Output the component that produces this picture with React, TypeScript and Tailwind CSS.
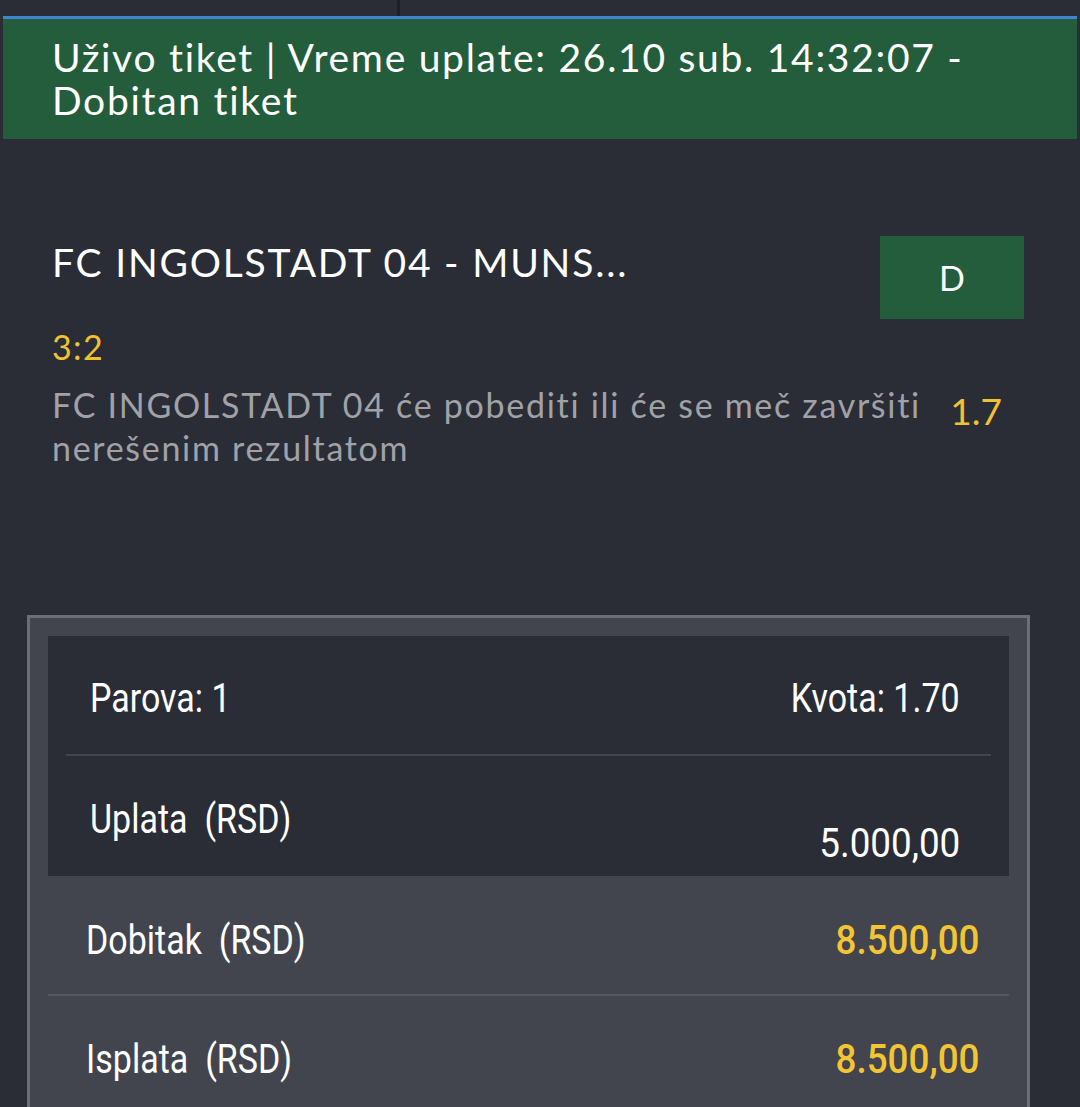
import React from "react";

const cond = "inline-block scale-x-[0.85] font-['Roboto',sans-serif]";

export default function App() {
  return (
    <div className="w-[1080px] h-[1107px] bg-[#2a2d36] overflow-hidden font-['Lato','Open_Sans',sans-serif]">
      {/* top strip */}
      <div className="h-[16px] flex">
        <div className="w-[397px]" />
        <div className="w-[3px] bg-[#1c1f26]" />
      </div>
      {/* banner */}
      <div className="mx-[3px] border-t-[3px] border-[#3f86cf] bg-[#235d3c] h-[123px] pl-[49px] pt-[17px]">
        <div className="text-white text-[39px] leading-[43px] tracking-[0.044em]">
          Uživo tiket | Vreme uplate: 26.10 sub. 14:32:07 -
          <br />
          Dobitan tiket
        </div>
      </div>
      {/* match */}
      <div className="pl-[52px] pr-[56px] pt-[97px]">
        <div className="flex justify-between items-start">
          <div className="text-white text-[39px] leading-[44px] pt-[4px] tracking-[0.046em]">
            FC INGOLSTADT 04 - MUNS...
          </div>
          <div className="w-[144px] h-[83px] bg-[#235d3c] flex items-center justify-center text-white text-[34px]">
            D
          </div>
        </div>
        <div className="text-[#f0c232] text-[34px] leading-[40px] mt-[8px] tracking-[0.04em]">3:2</div>
        <div className="flex items-start justify-between mt-[16px]">
          <div className="text-[#a0a2a8] text-[34px] leading-[43px] w-[885px] tracking-[0.05em]">
            FC INGOLSTADT 04 će pobediti ili će se meč završiti nerešenim rezultatom
          </div>
          <div className="text-[#f0c232] text-[37px] leading-[43px] pt-[6px] pr-[22px]">1.7</div>
        </div>
      </div>
      {/* summary box */}
      <div className="ml-[27px] mr-[50px] mt-[146px] border-[3px] border-b-0 border-[#6b6e75] bg-[#42454e] px-[18px] pt-[18px] pb-[40px]">
        <div className="bg-[#2a2d36] px-[18px]">
          <div className="h-[118px] flex items-center justify-between pl-[24px] pr-[31px] pt-[8px] text-white text-[40px]">
            <span className={`${cond} origin-left`}>Parova: 1</span>
            <span className={`${cond} origin-right`}>Kvota: 1.70</span>
          </div>
          <div className="h-[2px] bg-[#42454e]" />
          <div className="h-[120px] flex justify-between pl-[24px] pr-[31px] text-white text-[40px]">
            <span className={`${cond} origin-left pt-[34px] self-start`}>Uplata &nbsp;(RSD)</span>
            <span className={`${cond} origin-right pt-[58px] self-start scale-x-[0.92]`}>5.000,00</span>
          </div>
        </div>
        <div className="h-[118px] flex items-center justify-between pl-[38px] pr-[30px] pt-[12px] text-white text-[40px]">
          <span className={`${cond} origin-left`}>Dobitak &nbsp;(RSD)</span>
          <span className={`${cond} origin-right scale-x-[0.92] text-[#f3c532] font-medium`}>8.500,00</span>
        </div>
        <div className="h-[2px] bg-[#54575f]" />
        <div className="h-[118px] flex items-center justify-between pl-[38px] pr-[30px] pt-[10px] text-white text-[40px]">
          <span className={`${cond} origin-left`}>Isplata &nbsp;(RSD)</span>
          <span className={`${cond} origin-right scale-x-[0.92] text-[#f3c532] font-medium`}>8.500,00</span>
        </div>
      </div>
    </div>
  );
}
